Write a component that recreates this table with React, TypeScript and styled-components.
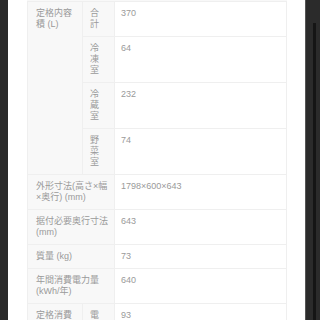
import styled, { createGlobalStyle } from "styled-components";

const GlobalStyle = createGlobalStyle`
  html, body {
    margin: 0;
    padding: 0;
    background: #2a2a2a;
  }
`;

const rows = [
  { sub: "合計", value: "370" },
  { sub: "冷凍室", value: "64" },
  { sub: "冷蔵室", value: "232" },
  { sub: "野菜室", value: "74" },
];

const App = () => {
  return (
    <>
      <GlobalStyle />
      <Screen>
        <LeftEdge />
        <Page>
          <SpecTable>
            <colgroup>
              <col style={{ width: 55 }} />
              <col style={{ width: 32 }} />
              <col />
            </colgroup>
            <tbody>
              {rows.map((r, i) => (
                <tr key={r.sub}>
                  {i === 0 && (
                    <Head rowSpan={rows.length}>定格内容積 (L)</Head>
                  )}
                  <SubHead>{r.sub}</SubHead>
                  <Value>{r.value}</Value>
                </tr>
              ))}
              <tr>
                <Head colSpan={2}>外形寸法(高さ×幅×奥行) (mm)</Head>
                <Value>1798×600×643</Value>
              </tr>
              <tr>
                <Head colSpan={2}>据付必要奥行寸法(mm)</Head>
                <Value>643</Value>
              </tr>
              <tr>
                <Head colSpan={2}>質量 (kg)</Head>
                <Value>73</Value>
              </tr>
              <tr>
                <Head colSpan={2}>年間消費電力量(kWh/年)</Head>
                <Value>640</Value>
              </tr>
              <tr>
                <Head rowSpan={2}>定格消費電力 (W)</Head>
                <SubHead>電動機</SubHead>
                <Value>93</Value>
              </tr>
            </tbody>
          </SpecTable>
        </Page>
        <ScrollTrack>
          <Thumb />
        </ScrollTrack>
      </Screen>
    </>
  );
};

const Screen = styled.div`
  display: flex;
  width: 320px;
  height: 320px;
  overflow: hidden;
`;

const LeftEdge = styled.div`
  width: 8px;
  flex-shrink: 0;
  background: #2a2a2a;
`;

const Page = styled.div`
  flex: 1;
  background: #fff;
  padding: 1px 18px 0 19px;
  overflow: hidden;
`;

const SpecTable = styled.table`
  width: 260px;
  border-collapse: collapse;
  table-layout: fixed;
  font-family: "Liberation Sans", "Noto Sans CJK JP", sans-serif;
  font-size: 9px;
  line-height: 11px;
  color: #9a9a9a;
  border-top: 1px solid #efefef;
  box-shadow: 0 -1px 0 #f8f8f8;
`;

const Head = styled.th`
  background: #f8f8f8;
  border: 1px solid #efefef;
  padding: 6px 3px 6px 8px;
  text-align: left;
  vertical-align: top;
  font-weight: normal;
`;

const SubHead = styled(Head)`
  padding: 6px 7px;
  word-break: break-all;
`;

const Value = styled.td`
  background: #fff;
  border: 1px solid #efefef;
  padding: 6px 6px;
  vertical-align: top;
`;

const ScrollTrack = styled.div`
  width: 15px;
  flex-shrink: 0;
  background: #2b2b2b;
  border-left: 1px solid #555;
  box-sizing: border-box;
  padding-top: 23px;
  padding-left: 7px;
`;

const Thumb = styled.div`
  width: 3px;
  height: 400px;
  background: #151515;
`;

export default App;
